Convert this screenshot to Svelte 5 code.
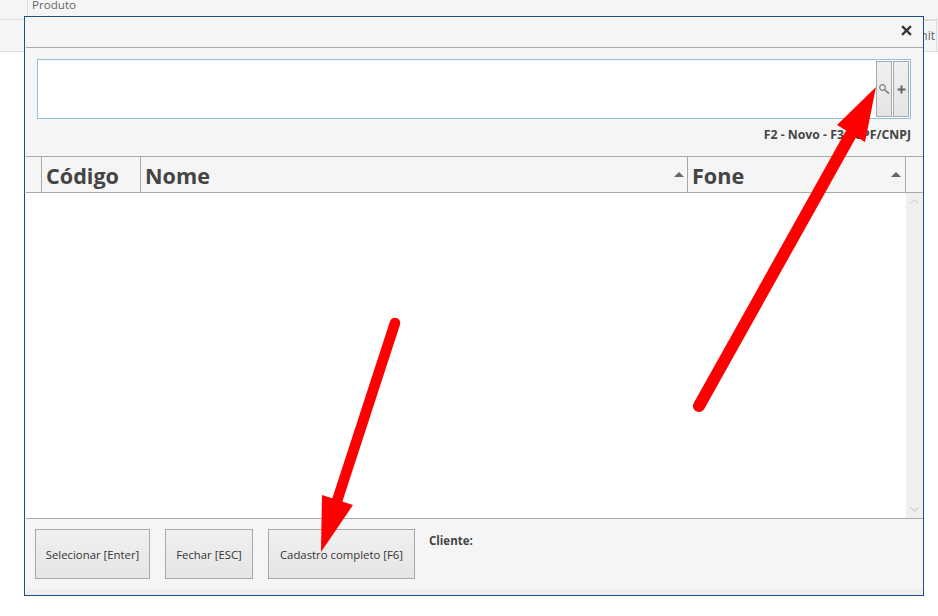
<script>
    const columns = [
        { label: 'Código', width: 99, sort: false },
        { label: 'Nome', width: 547, sort: true },
        { label: 'Fone', width: 218, sort: true }
    ];
    const actions = [
        { label: 'Selecionar [Enter]', width: 115 },
        { label: 'Fechar [ESC]', width: 88 },
        { label: 'Cadastro completo [F6]', width: 147 }
    ];
</script>

<div class="page">
    <div class="bg-head"><span class="bg-cell">Produto</span></div>
    <div class="bg-row"><span class="bg-btn">nit</span></div>

    <section class="dialog">
        <div class="titlebar">
            <svg class="close" viewBox="0 0 10 10" width="11" height="11">
                <path d="M1 1 L9 9 M9 1 L1 9" stroke="#333" stroke-width="2" fill="none" />
            </svg>
        </div>

        <div class="search">
            <div class="input">
                <button type="button" class="mini" aria-label="Buscar">
                    <svg viewBox="0 0 12 12" width="12" height="12">
                        <circle cx="4.5" cy="4.5" r="2.8" fill="none" stroke="#808080" stroke-width="1.2" />
                        <path d="M6.8 6.8 L11 10.6" stroke="#808080" stroke-width="1.6" />
                    </svg>
                </button>
                <button type="button" class="mini" aria-label="Novo">
                    <svg viewBox="0 0 9 9" width="9" height="9">
                        <path d="M4.5 .5 V8.5 M.5 4.5 H8.5" stroke="#666" stroke-width="2" fill="none" />
                    </svg>
                </button>
            </div>
            <p class="hint">F2 - Novo - F3 - CPF/CNPJ</p>
        </div>

        <div class="thead">
            <div class="gutter"></div>
            {#each columns as col}
                <div class="th" style="width: {col.width}px">
                    <span>{col.label}</span>
                    {#if col.sort}<i class="sort"></i>{/if}
                </div>
            {/each}
        </div>

        <div class="tbody">
            <div class="rows"></div>
            <div class="scrollbar">
                <svg viewBox="0 0 9 5" width="9" height="5"><path d="M.5 4.5 L4.5 1 L8.5 4.5" stroke="#dcdcdc" stroke-width="1.5" fill="none" /></svg>
                <svg viewBox="0 0 9 5" width="9" height="5"><path d="M.5 .5 L4.5 4 L8.5 .5" stroke="#d2d2d2" stroke-width="1.5" fill="none" /></svg>
            </div>
        </div>

        <div class="footer">
            {#each actions as action}
                <button type="button" class="action" style="width: {action.width}px">{action.label}</button>
            {/each}
            <strong class="client">Cliente:</strong>
        </div>
    </section>

    <svg class="arrows" viewBox="0 0 938 616" width="938" height="616">
        <path d="M699 406 L851 134" stroke="#fe0000" stroke-width="12" stroke-linecap="round" fill="none" />
        <path d="M876 87 L837 125 L865 142 Z" fill="#fe0000" />
        <path d="M395 323 L337 501" stroke="#fe0000" stroke-width="10.5" stroke-linecap="round" fill="none" />
        <path d="M321 552 L322 495 L353 505 Z" fill="#fe0000" />
    </svg>
</div>

<style>
    :global(body) {
        margin: 0;
        background: #fff;
    }
    .page {
        position: relative;
        width: 938px;
        height: 616px;
        overflow: hidden;
        font-family: "Open Sans", "Noto Sans", sans-serif;
        color: #333;
    }
    .bg-head {
        height: 20px;
        box-sizing: border-box;
        background: #f5f5f5;
        border-bottom: 1px solid #ddd;
        padding-left: 27px;
    }
    .bg-cell {
        display: block;
        height: 19px;
        border-left: 1px solid #ddd;
        padding-left: 4px;
        font-size: 11.6px;
        line-height: 10px;
        color: #666;
    }
    .bg-row {
        height: 32px;
        box-sizing: border-box;
        background: #f5f5f5;
        border-bottom: 1px solid #ddd;
        display: flex;
        justify-content: flex-end;
        padding-right: 1px;
    }
    .bg-btn {
        width: 30px;
        box-sizing: border-box;
        border: 1px solid #ddd;
        border-bottom: 0;
        font-size: 12px;
        line-height: 29px;
        text-align: right;
        padding-right: 1px;
        color: #666;
    }
    .dialog {
        position: absolute;
        left: 24px;
        top: 16px;
        width: 900px;
        height: 580px;
        box-sizing: border-box;
        border: 1px solid #1c4f91;
        background: #f5f5f5;
        display: flex;
        flex-direction: column;
    }
    .titlebar {
        height: 31px;
        flex: none;
        box-sizing: border-box;
        border-bottom: 1px solid #a9a9a9;
        display: flex;
        align-items: center;
        justify-content: flex-end;
        padding: 0 11px 4px 0;
        margin-left: 1px;
    }
    .search {
        height: 108px;
        flex: none;
        box-sizing: border-box;
        padding: 11px 12px 0;
    }
    .input {
        height: 60px;
        box-sizing: border-box;
        border: 1px solid #8fbfe3;
        background: #fff;
        display: flex;
        justify-content: flex-end;
        align-items: center;
        gap: 1px;
        padding-right: 1px;
    }
    .mini {
        width: 16px;
        height: 56px;
        box-sizing: border-box;
        padding: 0;
        border: 1px solid #a9a9a9;
        background: linear-gradient(#f0f0f0, #e5e5e5);
        display: flex;
        align-items: center;
        justify-content: center;
    }
    .hint {
        margin: 8px 0 0;
        text-align: right;
        font-size: 12.25px;
        font-weight: 700;
        line-height: 16px;
        color: #444;
    }
    .thead {
        height: 37px;
        flex: none;
        box-sizing: border-box;
        border-top: 1px solid #a9a9a9;
        border-bottom: 1px solid #a9a9a9;
        display: flex;
        margin-left: 1px;
    }
    .gutter {
        width: 15px;
        flex: none;
        border-right: 1px solid #a9a9a9;
    }
    .th {
        flex: none;
        box-sizing: border-box;
        border-right: 1px solid #a9a9a9;
        padding-left: 4px;
        display: flex;
        align-items: center;
        justify-content: space-between;
        font-size: 21.6px;
        font-weight: 700;
        color: #444;
    }
    .th span {
        padding-top: 2px;
    }
    .sort {
        width: 0;
        height: 0;
        margin: 0 3px 0 0;
        border: 5px solid transparent;
        border-top: 0;
        border-bottom: 5px solid #666;
    }
    .th:last-child .sort {
        margin-right: 4px;
    }
    .tbody {
        flex: 1;
        display: flex;
        background: #fff;
        border-bottom: 1px solid #a9a9a9;
        margin-left: 1px;
    }
    .rows {
        flex: 1;
    }
    .scrollbar {
        width: 17px;
        background: #f0f0f0;
        display: flex;
        flex-direction: column;
        align-items: center;
        justify-content: space-between;
        padding: 6px 0;
        box-sizing: border-box;
    }
    .footer {
        height: 76px;
        flex: none;
        box-sizing: border-box;
        padding: 10px 0 0 9px;
        margin-left: 1px;
        display: flex;
        align-items: flex-start;
        gap: 15px;
        background: linear-gradient(#f5f5f5 70px, #f0eded 70px);
    }
    .action {
        height: 50px;
        padding: 0;
        box-sizing: border-box;
        border: 1px solid #a9a9a9;
        background: linear-gradient(#f0f0f0, #e5e5e5);
        font-family: inherit;
        font-size: 11.35px;
        color: #333;
    }
    .client {
        margin: 3px 0 0 -1px;
        font-size: 11.5px;
        line-height: 18px;
        color: #444;
    }
    .arrows {
        position: absolute;
        left: 0;
        top: 0;
        pointer-events: none;
    }
</style>
